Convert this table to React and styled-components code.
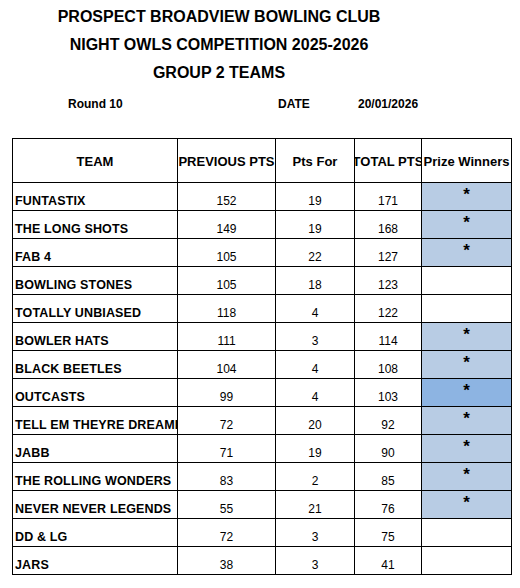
import React from 'react';
import styled, { createGlobalStyle } from 'styled-components';

const GlobalStyle = createGlobalStyle`
  body {
    margin: 0;
    background: #ffffff;
    font-family: "Liberation Sans", Arial, sans-serif;
    color: #000000;
  }
`;

const COLUMNS = [165, 98, 79, 67, 90];

const TEAMS = [
  { name: 'FUNTASTIX', prev: 152, ptsFor: 19, total: 171, prize: 'yes' },
  { name: 'THE LONG SHOTS', prev: 149, ptsFor: 19, total: 168, prize: 'yes' },
  { name: 'FAB 4', prev: 105, ptsFor: 22, total: 127, prize: 'yes' },
  { name: 'BOWLING STONES', prev: 105, ptsFor: 18, total: 123 },
  { name: 'TOTALLY UNBIASED', prev: 118, ptsFor: 4, total: 122 },
  { name: 'BOWLER HATS', prev: 111, ptsFor: 3, total: 114, prize: 'yes' },
  { name: 'BLACK BEETLES', prev: 104, ptsFor: 4, total: 108, prize: 'yes' },
  { name: 'OUTCASTS', prev: 99, ptsFor: 4, total: 103, prize: 'selected' },
  { name: 'TELL EM THEYRE DREAMING', prev: 72, ptsFor: 20, total: 92, prize: 'yes' },
  { name: 'JABB', prev: 71, ptsFor: 19, total: 90, prize: 'yes' },
  { name: 'THE ROLLING WONDERS', prev: 83, ptsFor: 2, total: 85, prize: 'yes' },
  { name: 'NEVER NEVER LEGENDS', prev: 55, ptsFor: 21, total: 76, prize: 'yes' },
  { name: 'DD & LG', prev: 72, ptsFor: 3, total: 75 },
  { name: 'JARS', prev: 38, ptsFor: 3, total: 41 },
];

const Sheet = styled.div`
  width: 520px;
  height: 588px;
  overflow: hidden;
  padding-top: 3px;
  box-sizing: border-box;
`;

const Titles = styled.div`
  width: 438px;
  text-align: center;
`;

const TitleLine = styled.div`
  font-size: 16px;
  font-weight: bold;
  line-height: 28px;
  white-space: nowrap;
`;

const InfoRow = styled.div`
  display: flex;
  margin-top: 9px;
  padding-left: 68px;
  font-size: 12px;
  font-weight: bold;
  line-height: 16px;
`;

const InfoItem = styled.span`
  width: ${props => props.$width}px;
`;

const Table = styled.div`
  display: grid;
  grid-template-columns: ${COLUMNS.map(w => `${w}px`).join(' ')};
  grid-template-rows: 44px;
  grid-auto-rows: 28px;
  width: max-content;
  margin: 26px 0 0 12px;
  border-left: 1px solid #000;
  border-top: 1px solid #000;
`;

const Cell = styled.div`
  display: flex;
  box-sizing: border-box;
  border-right: 1px solid #000;
  border-bottom: 1px solid #000;
  overflow: hidden;
  white-space: nowrap;
`;

const HeaderCell = styled(Cell)`
  align-items: center;
  justify-content: center;
  font-size: 13px;
  font-weight: bold;
  padding-top: 1px;
`;

const HeaderText = styled.span`
  flex-shrink: 0;
`;

const NameCell = styled(Cell)`
  align-items: flex-end;
  padding: 0 0 2px 2px;
  font-size: 12.5px;
  font-weight: bold;
  letter-spacing: 0.15px;
  line-height: 14px;
`;

const NumberCell = styled(Cell)`
  align-items: flex-end;
  justify-content: center;
  padding-bottom: 2px;
  font-size: 12px;
  line-height: 14px;
`;

const PrizeCell = styled(Cell)`
  justify-content: center;
  align-items: flex-start;
  padding-top: 4px;
  font-size: 17px;
  font-weight: bold;
  line-height: 16px;
  background: ${props =>
    props.$prize === 'selected' ? '#8db4e2' : props.$prize ? '#b8cce4' : '#ffffff'};
`;

const HEADERS = ['TEAM', 'PREVIOUS PTS', 'Pts For', 'TOTAL PTS', 'Prize Winners'];

const App = () => (
  <Sheet>
    <GlobalStyle />
    <Titles>
      <TitleLine>PROSPECT BROADVIEW BOWLING CLUB</TitleLine>
      <TitleLine>NIGHT OWLS COMPETITION 2025-2026</TitleLine>
      <TitleLine>GROUP 2 TEAMS</TitleLine>
    </Titles>
    <InfoRow>
      <InfoItem $width={210}>Round 10</InfoItem>
      <InfoItem $width={80}>DATE</InfoItem>
      <InfoItem $width={80}>20/01/2026</InfoItem>
    </InfoRow>
    <Table>
      {HEADERS.map(h => (
        <HeaderCell key={h}>
          <HeaderText>{h}</HeaderText>
        </HeaderCell>
      ))}
      {TEAMS.map(team => (
        <React.Fragment key={team.name}>
          <NameCell>{team.name}</NameCell>
          <NumberCell>{team.prev}</NumberCell>
          <NumberCell>{team.ptsFor}</NumberCell>
          <NumberCell>{team.total}</NumberCell>
          <PrizeCell $prize={team.prize}>{team.prize ? '*' : ''}</PrizeCell>
        </React.Fragment>
      ))}
    </Table>
  </Sheet>
);

export default App;
